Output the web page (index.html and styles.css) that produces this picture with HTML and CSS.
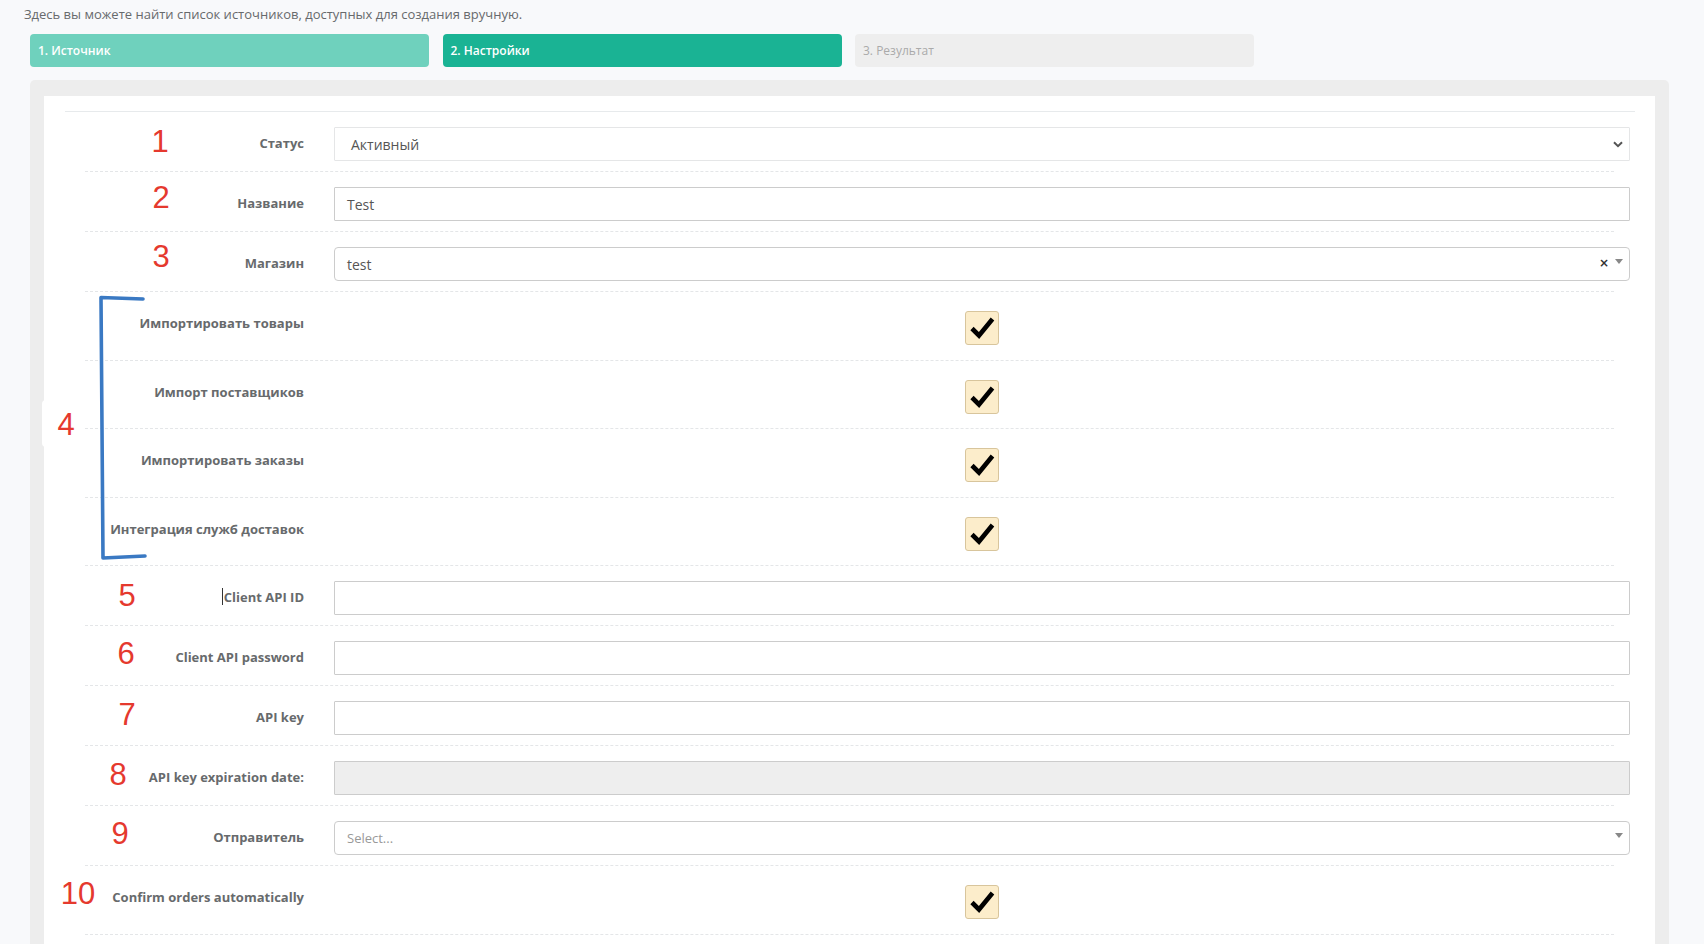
FILE: index.html
```html
<!DOCTYPE html>
<html lang="ru">
<head>
<meta charset="utf-8">
<title>Настройки источника</title>
<link rel="stylesheet" href="styles.css">
</head>
<body>
<p class="intro">Здесь вы можете найти список источников, доступных для создания вручную.</p>
<div class="steps">
  <div class="step step-done">1. Источник</div>
  <div class="step step-current">2. Настройки</div>
  <div class="step step-disabled">3. Результат</div>
</div>
<div class="panel">
  <div class="card">
    <div class="card-body">
      <div class="row">
        <div class="label">Статус</div>
        <div class="field control select-native"><span class="value indent">Активный</span>
          <svg class="chev" width="10" height="7" viewBox="0 0 10 7"><path d="M1 1.2 L5 5.2 L9 1.2" fill="none" stroke="#555" stroke-width="2"/></svg>
        </div>
      </div>
      <div class="row">
        <div class="label">Название</div>
        <div class="field control dark"><span class="value">Test</span></div>
      </div>
      <div class="row">
        <div class="label">Магазин</div>
        <div class="field control dark rounded"><span class="value">test</span>
          <span class="tools"><span class="clear">×</span><span class="tri"></span></span>
        </div>
      </div>
      <div class="row check-row">
        <div class="label">Импортировать товары</div>
        <div class="field"><span class="cb"><svg width="34" height="34" viewBox="0 0 34 34"><path d="M7 17.5 L14 24.5 L27.5 8" fill="none" stroke="#000" stroke-width="4.6"/></svg></span></div>
      </div>
      <div class="row check-row">
        <div class="label">Импорт поставщиков</div>
        <div class="field"><span class="cb"><svg width="34" height="34" viewBox="0 0 34 34"><path d="M7 17.5 L14 24.5 L27.5 8" fill="none" stroke="#000" stroke-width="4.6"/></svg></span></div>
      </div>
      <div class="row check-row">
        <div class="label">Импортировать заказы</div>
        <div class="field"><span class="cb"><svg width="34" height="34" viewBox="0 0 34 34"><path d="M7 17.5 L14 24.5 L27.5 8" fill="none" stroke="#000" stroke-width="4.6"/></svg></span></div>
      </div>
      <div class="row check-row">
        <div class="label">Интеграция служб доставок</div>
        <div class="field"><span class="cb"><svg width="34" height="34" viewBox="0 0 34 34"><path d="M7 17.5 L14 24.5 L27.5 8" fill="none" stroke="#000" stroke-width="4.6"/></svg></span></div>
      </div>
      <div class="row">
        <div class="label"><span class="caret"></span>Client API ID</div>
        <div class="field control dark"></div>
      </div>
      <div class="row">
        <div class="label">Client API password</div>
        <div class="field control dark"></div>
      </div>
      <div class="row">
        <div class="label">API key</div>
        <div class="field control dark"></div>
      </div>
      <div class="row">
        <div class="label">API key expiration date:</div>
        <div class="field control dark disabled"></div>
      </div>
      <div class="row">
        <div class="label">Отправитель</div>
        <div class="field control dark rounded"><span class="value placeholder">Select...</span>
          <span class="tools"><span class="tri"></span></span>
        </div>
      </div>
      <div class="row check-row">
        <div class="label">Confirm orders automatically</div>
        <div class="field"><span class="cb"><svg width="34" height="34" viewBox="0 0 34 34"><path d="M7 17.5 L14 24.5 L27.5 8" fill="none" stroke="#000" stroke-width="4.6"/></svg></span></div>
      </div>
    </div>
  </div>
</div>

<div class="patch"></div>
<svg class="bracket" width="60" height="280" viewBox="90 290 60 280"><path d="M143 299 L101 297.5 L103 558 L145 556" fill="none" stroke="#3a79c3" stroke-width="3.6" stroke-linecap="round" stroke-linejoin="round"/></svg>
<div class="num n1">1</div>
<div class="num n2">2</div>
<div class="num n3">3</div>
<div class="num n4">4</div>
<div class="num n5">5</div>
<div class="num n6">6</div>
<div class="num n7">7</div>
<div class="num n8">8</div>
<div class="num n9">9</div>
<div class="num n10">10</div>
</body>
</html>
```
FILE: styles.css
```css
html, body {
  margin: 0;
  padding: 0;
}
body {
  position: relative;
  width: 1704px;
  height: 944px;
  overflow: hidden;
  background: #f8f9fb;
  font-family: "Open Sans", "Noto Sans", sans-serif;
  color: #676a6c;
}
.intro {
  margin: 0;
  padding: 4px 0 0 24px;
  font-size: 13px;
  line-height: 20px;
  color: #676a6c;
}
.steps {
  display: flex;
  gap: 13.5px;
  margin: 10px 0 0 30px;
}
.step {
  width: 399px;
  height: 33px;
  box-sizing: border-box;
  padding-left: 8px;
  border-radius: 4px;
  font-size: 12px;
  font-weight: 600;
  line-height: 33px;
  color: #fff;
}
.step-done { background: #6fd1bd; }
.step-current { background: #1ab394; }
.step-disabled { background: #eeeeee; color: #aaaaaa; font-weight: 400; }

.panel {
  margin: 13px 0 0 30px;
  width: 1639px;
  box-sizing: border-box;
  padding: 16px 14px 0 14px;
  background: #ededed;
  border-radius: 5px 5px 0 0;
  height: 865px;
  overflow: hidden;
}
.card {
  background: #fff;
  padding: 15px 20px 0 21px;
  height: 100%;
  box-sizing: border-box;
}
.card-body {
  border-top: 1px solid #e7eaec;
}
.row {
  display: flex;
  align-items: flex-start;
  margin: 0 21px 0 20px;
  padding: 15px 0 10px 0;
  border-bottom: 1px dashed #e4e6e8;
}
.check-row {
  height: 42.5px;
  box-sizing: content-box;
}
.label {
  width: 219px;
  flex: none;
  padding-top: 7px;
  text-align: right;
  font-size: 13px;
  font-weight: 700;
  line-height: 18px;
  color: #676a6c;
  white-space: nowrap;
}
.caret {
  display: inline-block;
  width: 1px;
  height: 17px;
  background: #333;
  vertical-align: -3px;
  margin-right: 1px;
}
.field {
  flex: 1;
  margin-left: 30px;
  margin-right: -16px;
  display: flex;
  align-items: center;
  justify-content: center;
}
.control {
  height: 34px;
  box-sizing: border-box;
  border: 1px solid #e5e6e7;
  border-radius: 1px;
  justify-content: space-between;
  padding: 0 6px 0 12px;
  background: #fff;
}
.control.dark { border-color: #cccccc; }
.control.rounded { border-radius: 4px; }
.control.disabled { background: #eeeeee; }
.value {
  font-size: 14px;
  color: #555;
}
.value.indent { padding-left: 4px; }
.value.placeholder { color: #999; font-size: 13px; }
.chev { margin-top: 1px; }
.tools {
  display: flex;
  align-items: center;
  gap: 6px;
  margin-top: -2px;
}
.clear {
  font-family: "DejaVu Sans", sans-serif;
  font-size: 12px;
  font-weight: 700;
  color: #333;
  line-height: 1;
}
.tri {
  width: 0;
  height: 0;
  border-left: 4px solid transparent;
  border-right: 4px solid transparent;
  border-top: 5px solid #888;
  margin-top: -4px;
}
.cb {
  display: block;
  width: 34px;
  height: 34px;
  box-sizing: border-box;
  margin-top: 4px;
  background: #fcedcb;
  border: 1px solid #d8c59c;
  border-radius: 3px;
  position: relative;
}
.cb svg {
  position: absolute;
  left: -1px;
  top: -1px;
}

/* annotation overlay */
.patch {
  position: absolute;
  left: 42px;
  top: 400px;
  width: 20px;
  height: 47px;
  background: #fff;
  border-radius: 4px;
}
.bracket {
  position: absolute;
  left: 90px;
  top: 290px;
}
.num {
  position: absolute;
  width: 40px;
  text-align: center;
  font-family: "Liberation Sans", Arial, sans-serif;
  font-size: 31px;
  line-height: 1;
  color: #e5392e;
}
.n1 { left: 140px; top: 126px; }
.n2 { left: 141px; top: 182px; }
.n3 { left: 141px; top: 241px; }
.n4 { left: 46px; top: 409px; }
.n5 { left: 107px; top: 580px; }
.n6 { left: 106px; top: 638px; }
.n7 { left: 107px; top: 699px; }
.n8 { left: 98px; top: 759px; }
.n9 { left: 100px; top: 818px; }
.n10 { left: 48px; top: 878px; width: 60px; }
```
